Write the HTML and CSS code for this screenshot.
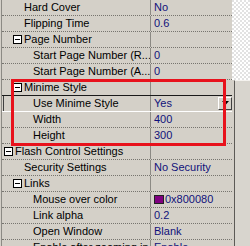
FILE: index.html
```html
<!DOCTYPE html>
<html lang="en">
<head>
    <meta charset="UTF-8">
    <title>Property Grid</title>
    <link rel="stylesheet" href="styles.css">
</head>
<body>

    <div class="panel">

        <!-- Property rows -->
        <div class="grid">
            <div class="row"><div class="name l1">Hard Cover</div><div class="value">No</div></div>
            <div class="row"><div class="name l1">Flipping Time</div><div class="value">0.6</div></div>
            <div class="row"><div class="name c1"><span class="toggle"></span>Page Number</div><div class="value"></div></div>
            <div class="row"><div class="name l2">Start Page Number (R...</div><div class="value">0</div></div>
            <div class="row"><div class="name l2">Start Page Number (A...</div><div class="value">0</div></div>
            <div class="row before-sel"><div class="name c1"><span class="toggle"></span>Minime Style</div><div class="value"></div></div>
            <div class="row sel">
                <div class="name l2">Use Minime Style</div>
                <div class="value">Yes
                    <span class="drop">
                        <svg width="7" height="5" viewBox="0 0 7 5"><path d="M0 0h7L3.5 4z" fill="#000"/></svg>
                    </span>
                </div>
            </div>
            <div class="row"><div class="name l2">Width</div><div class="value">400</div></div>
            <div class="row"><div class="name l2">Height</div><div class="value">300</div></div>
            <div class="row"><div class="name c0"><span class="toggle"></span>Flash Control Settings</div><div class="value"></div></div>
            <div class="row"><div class="name l1">Security Settings</div><div class="value">No Security</div></div>
            <div class="row"><div class="name c1"><span class="toggle"></span>Links</div><div class="value"></div></div>
            <div class="row"><div class="name l2">Mouse over color</div><div class="value"><span class="swatch" style="background:#800080"></span>0x800080</div></div>
            <div class="row"><div class="name l2">Link alpha</div><div class="value">0.2</div></div>
            <div class="row"><div class="name l2">Open Window</div><div class="value">Blank</div></div>
            <div class="row"><div class="name l2">Enable after zooming in</div><div class="value">Enable</div></div>
        </div>

        <!-- Scroll strip -->
        <div class="strip">
            <div class="checker"></div>
            <div class="thumb"></div>
        </div>

        <!-- Red highlight around Minime Style -->
        <div class="callout"></div>
    </div>

</body>
</html>
```

FILE: styles.css
```css
/* General Styles */
body {
    margin: 0;
    padding: 0;
    background: #d4d0c8;
    font-family: "Liberation Sans", Arial, sans-serif;
    font-size: 11px;
    color: #000;
    overflow: hidden;
    height: 246px;
}

.panel {
    position: relative;
    display: flex;
    width: 250px;
    height: 246px;
}

/* Grid */
.grid {
    width: 230px;
    margin-left: 1px;
    border-left: 1px solid #8c8a84;
}

.row {
    display: flex;
    height: 16px;
    box-sizing: border-box;
    border-bottom: 1px dotted #77756f;
    line-height: 15px;
    white-space: nowrap;
}

.name {
    width: 149px;
    border-right: 1px solid #8c8a84;
    overflow: hidden;
    display: flex;
    align-items: center;
    box-sizing: border-box;
}

.value {
    flex: 1;
    padding-left: 3px;
    color: #10107a;
    display: flex;
    align-items: center;
    overflow: hidden;
}

.l1 { padding-left: 22px; }
.l2 { padding-left: 31px; }
.c0 { padding-left: 2px; }
.c1 { padding-left: 11px; }

.toggle {
    position: relative;
    width: 9px;
    height: 9px;
    box-sizing: border-box;
    border: 1px solid #000;
    background: #fff;
    margin-right: 2px;
    flex-shrink: 0;
}

.toggle::after {
    content: "";
    position: absolute;
    left: 1px;
    top: 3px;
    width: 5px;
    height: 1px;
    background: #000;
}

/* Selected row */
.before-sel {
    border-bottom: 1px solid #1a1a1a;
}

.sel {
    border-bottom: 1px solid #fff;
}

.sel .name {
    margin-left: 1px;
    width: 148px;
    border-left: 1px solid #404040;
    padding-left: 29px;
}

.drop {
    margin-left: auto;
    width: 14px;
    height: 13px;
    box-sizing: border-box;
    border: 1px solid;
    border-color: #fff #404040 #404040 #fff;
    background: #d4d0c8;
    display: flex;
    align-items: center;
    justify-content: center;
}

.swatch {
    width: 10px;
    height: 9px;
    box-sizing: border-box;
    border: 1px solid #222;
    margin-right: 1px;
}

/* Right strip */
.strip {
    width: 18px;
    display: flex;
    flex-direction: column;
}

.checker {
    height: 80px;
    background: repeating-conic-gradient(#fff 0 25%, #e2e2e2 0 50%) 0 0 / 4px 4px;
}

.thumb {
    flex: 1;
    margin-left: 2px;
    border-left: 1px solid #5c5a56;
    border-top: 1px solid #f4f2ee;
    background: #d8d5ce;
}

/* Annotation */
.callout {
    position: absolute;
    left: 11px;
    top: 79px;
    width: 215px;
    height: 67px;
    box-sizing: border-box;
    border: 3px solid #e8121c;
}
```
